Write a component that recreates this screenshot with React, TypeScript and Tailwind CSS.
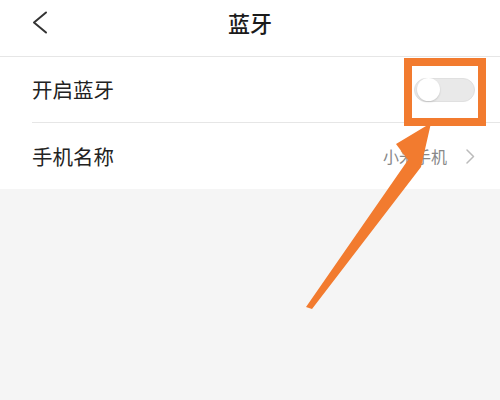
import React from "react";

export default function App() {
  const font = { fontFamily: '"Noto Sans CJK SC", "Noto Sans", sans-serif' };
  return (
    <div className="relative w-[500px] h-[400px] bg-[#f5f5f5] overflow-hidden" style={font}>
      <div className="bg-white">
        <div className="h-[57px] relative flex items-center justify-center border-b border-[#e6e6e6]">
          <svg className="absolute left-[31px] top-[11px]" width="18" height="24" viewBox="0 0 18 24">
            <path d="M15 1.5 L3 11.5 L15 21.5" fill="none" stroke="#333" strokeWidth="2" strokeLinecap="round" strokeLinejoin="round" />
          </svg>
          <span className="text-[22px] leading-none text-[#1a1a1a] font-medium mt-[-12px]">蓝牙</span>
        </div>
        <div className="pl-[32px]">
          <div className="h-[66px] flex items-center border-b border-[#e6e6e6] pr-[25px]">
            <span className="flex-1 text-[20.5px] text-[#222] leading-none">开启蓝牙</span>
            <div className="w-[61px] h-[24px] rounded-full bg-[#e9e9e9] border border-[#e0e0e0] flex items-center px-[2px]">
              <div className="w-[23px] h-[23px] rounded-full bg-white shadow-[0_1px_2px_rgba(0,0,0,0.15)]" />
            </div>
          </div>
          <div className="h-[66px] flex items-center pr-[25px]">
            <span className="flex-1 text-[20.5px] text-[#222] leading-none">手机名称</span>
            <span className="text-[16px] text-[#888] leading-none mr-[19px]">小米手机</span>
            <svg width="9" height="15" viewBox="0 0 9 15">
              <path d="M1 1 L7.5 7.5 L1 14" fill="none" stroke="#bbb" strokeWidth="1.5" strokeLinecap="round" strokeLinejoin="round" />
            </svg>
          </div>
        </div>
      </div>
      <svg className="absolute left-0 top-0 pointer-events-none" width="500" height="400" viewBox="0 0 500 400">
        <rect x="408" y="62" width="74" height="60" fill="none" stroke="#f27b2f" strokeWidth="8" />
        <polygon
          points="431,123 421,167 312,309 306,307 408,160 396,144"
          fill="#f27b2f"
        />
      </svg>
    </div>
  );
}
